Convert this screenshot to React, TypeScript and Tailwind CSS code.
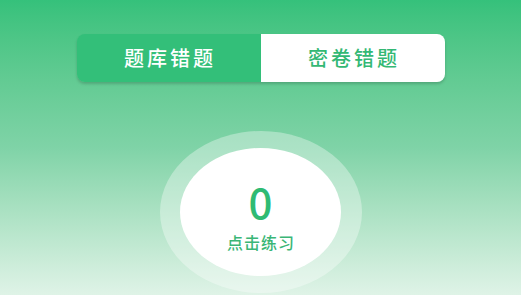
export default function App() {
  return (
    <div
      className="h-[295px] w-full overflow-hidden bg-gradient-to-b from-[#35c17b] via-[#7fd3a7] to-[#dff3e7] flex flex-col items-center"
      style={{ fontFamily: "'Noto Sans CJK SC', 'Noto Sans', sans-serif" }}
    >
      {/* Tabs */}
      <div className="mt-[34px] w-[368px] h-[48px] flex rounded-lg overflow-hidden shadow-[0_2px_3px_rgba(0,0,0,0.18)]">
        <button className="flex-1 bg-[#33bf79] text-white text-[20px] font-medium tracking-[3px] pl-[3px] flex items-center justify-center">
          题库错题
        </button>
        <button className="flex-1 bg-white text-[#33b874] text-[20px] font-medium tracking-[3px] pl-[3px] flex items-center justify-center">
          密卷错题
        </button>
      </div>

      {/* Practice circle */}
      <div className="mt-[49px] w-[202px] h-[162px] rounded-[50%] bg-white/35 flex items-center justify-center shrink-0">
        <div className="w-[161px] h-[128px] rounded-[50%] bg-white flex flex-col items-center justify-center">
          <span className="text-[42px] font-medium leading-none text-[#2fbb73] mt-[6px]">0</span>
          <span className="mt-[12px] text-[16px] font-medium leading-none tracking-[1px] pl-[1px] text-[#3ab676]">
            点击练习
          </span>
        </div>
      </div>
    </div>
  );
}
